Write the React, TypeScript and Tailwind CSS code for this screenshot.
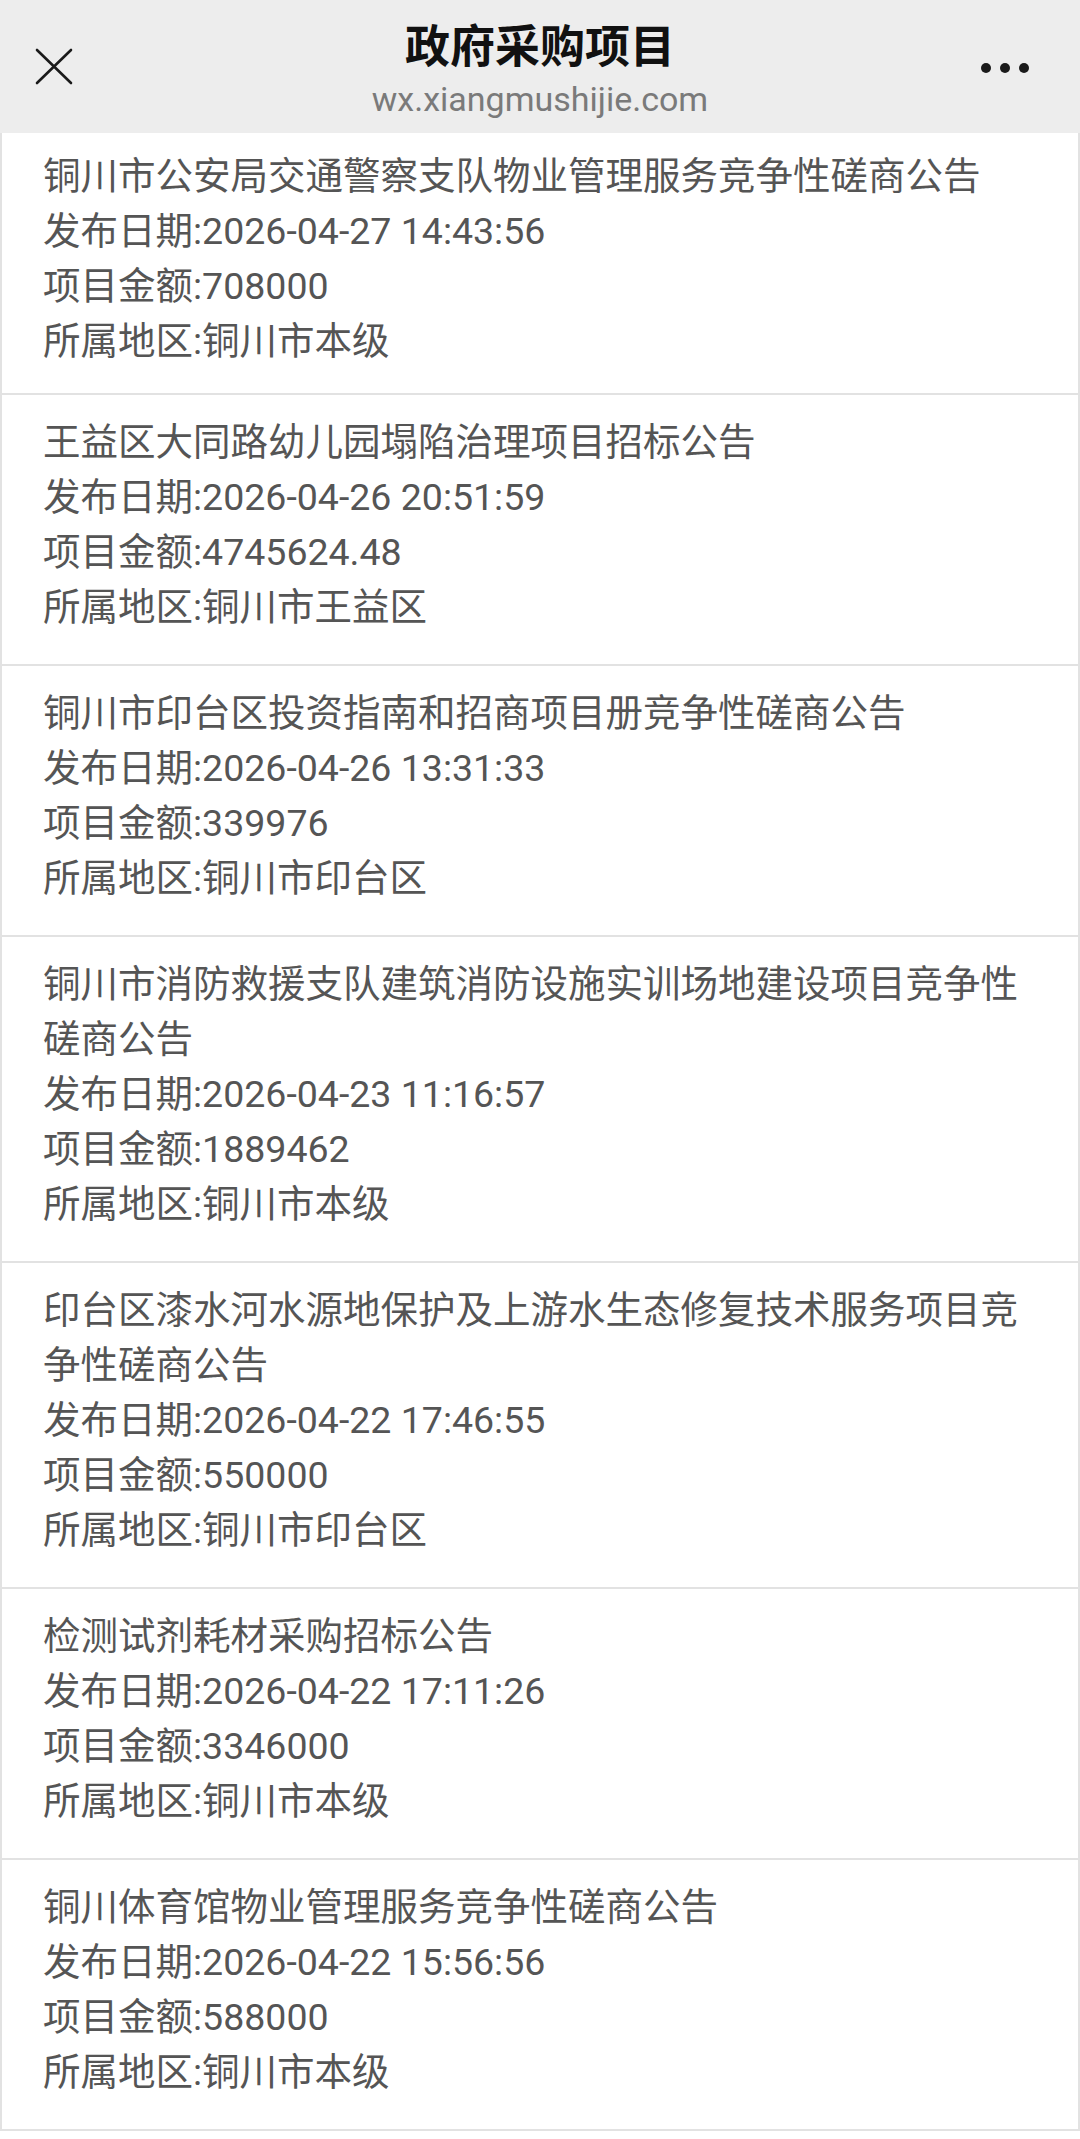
const items = [
  {
    title: "铜川市公安局交通警察支队物业管理服务竞争性磋商公告",
    date: "2026-04-27 14:43:56",
    amount: "708000",
    region: "铜川市本级",
  },
  {
    title: "王益区大同路幼儿园塌陷治理项目招标公告",
    date: "2026-04-26 20:51:59",
    amount: "4745624.48",
    region: "铜川市王益区",
  },
  {
    title: "铜川市印台区投资指南和招商项目册竞争性磋商公告",
    date: "2026-04-26 13:31:33",
    amount: "339976",
    region: "铜川市印台区",
  },
  {
    title: "铜川市消防救援支队建筑消防设施实训场地建设项目竞争性磋商公告",
    date: "2026-04-23 11:16:57",
    amount: "1889462",
    region: "铜川市本级",
  },
  {
    title: "印台区漆水河水源地保护及上游水生态修复技术服务项目竞争性磋商公告",
    date: "2026-04-22 17:46:55",
    amount: "550000",
    region: "铜川市印台区",
  },
  {
    title: "检测试剂耗材采购招标公告",
    date: "2026-04-22 17:11:26",
    amount: "3346000",
    region: "铜川市本级",
  },
  {
    title: "铜川体育馆物业管理服务竞争性磋商公告",
    date: "2026-04-22 15:56:56",
    amount: "588000",
    region: "铜川市本级",
  },
];

export default function App() {
  return (
    <div className="min-h-screen bg-white font-['Roboto','Noto_Sans_CJK_SC',sans-serif]">
      {/* TOP BAR */}
      <header className="flex h-[133px] bg-[#ededed]">
        <div className="w-[140px] pl-[35px] pt-[48px]">
          <svg width="38" height="37" viewBox="0 0 38 37" fill="none">
            <path d="M2 2 L36 35 M36 2 L2 35" stroke="#1a1a1a" strokeWidth="2.6" strokeLinecap="round" />
          </svg>
        </div>

        <div className="flex flex-1 flex-col items-center pt-[22px]">
          <h1 className="text-[45px] leading-[52px] font-bold text-[#111111]">政府采购项目</h1>
          <p className="mt-[6px] text-[34px] leading-[38px] text-[#7a7a7a]">wx.xiangmushijie.com</p>
        </div>

        <div className="flex w-[140px] justify-end gap-[9px] pr-[51px] pt-[63px]">
          <span className="h-[10px] w-[10px] rounded-full bg-[#1a1a1a]" />
          <span className="h-[10px] w-[10px] rounded-full bg-[#1a1a1a]" />
          <span className="h-[10px] w-[10px] rounded-full bg-[#1a1a1a]" />
        </div>
      </header>

      {/* LIST */}
      <ul>
        {items.map((item, i) => (
          <li
            key={item.date}
            className={
              i === 0
                ? "border-x-2 border-b-2 border-[#e2e2e2] pl-[41px] pr-[43px] pt-[16px] pb-[24px] text-[37.5px] leading-[55px] text-[#555555]"
                : "border-x-2 border-b-2 border-[#e2e2e2] pl-[41px] pr-[43px] pt-[20px] pb-[29px] text-[37.5px] leading-[55px] text-[#555555]"
            }
          >
            <p>{item.title}</p>
            <p>发布日期:{item.date}</p>
            <p>项目金额:{item.amount}</p>
            <p>所属地区:{item.region}</p>
          </li>
        ))}
      </ul>
    </div>
  );
}
